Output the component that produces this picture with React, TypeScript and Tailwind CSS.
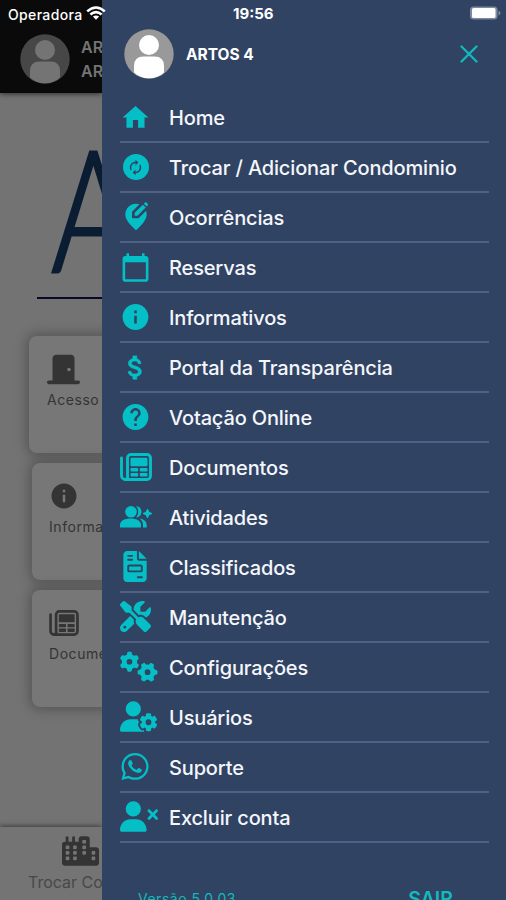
import type { ReactNode } from "react";
import {
  MdAttachMoney,
  MdCalendarToday,
  MdEditLocationAlt,
  MdHelp,
  MdHome,
  MdInfo,
  MdSync,
} from "react-icons/md";
import {
  FaCity,
  FaDoorClosed,
  FaFileInvoice,
  FaGears,
  FaScrewdriverWrench,
  FaUserGear,
  FaUserXmark,
  FaWhatsapp,
} from "react-icons/fa6";

const MENU: { label: string; icon: ReactNode; box: string }[] = [
  { label: "Home", icon: <MdHome size={31} />, box: "w-[31px]" },
  {
    label: "Trocar / Adicionar Condominio",
    icon: <SwapIcon />,
    box: "w-[31px]",
  },
  {
    label: "Ocorrências",
    icon: <MdEditLocationAlt size={32} />,
    box: "w-[32px]",
  },
  { label: "Reservas", icon: <MdCalendarToday size={31} />, box: "w-[31px]" },
  { label: "Informativos", icon: <MdInfo size={32} />, box: "w-[31px]" },
  {
    label: "Portal da Transparência",
    icon: (
      <MdAttachMoney
        size={31}
        className="[&>path:last-child]:stroke-current [&>path:last-child]:stroke-[0.5px]"
      />
    ),
    box: "w-[31px]",
  },
  { label: "Votação Online", icon: <MdHelp size={32} />, box: "w-[31px]" },
  {
    label: "Documentos",
    icon: <NewspaperIcon className="h-[28px] w-[32px]" />,
    box: "w-[32px]",
  },
  { label: "Atividades", icon: <PeopleIcon />, box: "w-[32px]" },
  {
    label: "Classificados",
    icon: <FaFileInvoice size={31} />,
    box: "w-[30px] -mt-[2px]",
  },
  {
    label: "Manutenção",
    icon: <FaScrewdriverWrench size={31} />,
    box: "w-[31px] -mt-[2px]",
  },
  {
    label: "Configurações",
    icon: <FaGears className="h-[31px] w-[38px]" />,
    box: "w-[38px] -mt-[2px]",
  },
  {
    label: "Usuários",
    icon: <FaUserGear className="h-[31px] w-[38px]" />,
    box: "w-[38px] -mt-[2px]",
  },
  { label: "Suporte", icon: <FaWhatsapp size={31} />, box: "w-[30px] -mt-[2px]" },
  {
    label: "Excluir conta",
    icon: <FaUserXmark className="h-[31px] w-[38px]" />,
    box: "w-[38px] -mt-[2px]",
  },
];

function SwapIcon() {
  return (
    <span className="flex size-[26px] items-center justify-center rounded-full bg-[#05bfc6] text-[#304363]">
      <MdSync size={17} className="-scale-x-100" />
    </span>
  );
}

function NewspaperIcon({ className }: { className: string }) {
  return (
    <svg viewBox="0 0 32 28" fill="currentColor" className={className}>
      <path
        d="M1.500 5v17.500a4 4 0 0 0 4 4H27a3.500 3.500 0 0 0 3.500-3.500V5A3.500 3.500 0 0 0 27 1.500H11A3.500 3.500 0 0 0 7.500 5v17.500a3 3 0 0 1-3 4"
        fill="none"
        stroke="currentColor"
        strokeWidth="2.900"
        strokeLinecap="round"
      />
      <rect x="10.500" y="4.700" width="17" height="8.600" rx="1" />
      <rect x="10.500" y="15" width="7.700" height="3.600" rx="0.800" />
      <rect x="19.800" y="15" width="7.700" height="3.600" rx="0.800" />
      <rect x="10.500" y="20" width="7.700" height="3.600" rx="0.800" />
      <rect x="19.800" y="20" width="7.700" height="3.600" rx="0.800" />
    </svg>
  );
}

function PeopleIcon() {
  return (
    <svg width="32" height="24" viewBox="0 0 32 24" fill="currentColor">
      <circle cx="11" cy="6.800" r="5.800" />
      <path d="M0 22.500v-2.500c0-4.500 5-6.500 10.500-6.500s10.500 2 10.500 6.500v2.500z" />
      <path d="M16 1c3.500.3 5.400 2.800 5.400 5.800s-1.900 5.500-5.400 5.800c1.500-1.500 2.200-3.500 2.200-5.800S17.500 2.500 16 1z" />
      <path d="M19.700 13.500c4.300.8 7 2.900 7 6.500v2.500H23V20c0-2.400-1-4.600-3.300-6.500z" />
      <path
        d="M27.500 4.500l1.400 2.700 2.700 1.300-2.700 1.300-1.400 2.700-1.400-2.700-2.700-1.300 2.700-1.300z"
        stroke="currentColor"
        strokeWidth="1.200"
        strokeLinejoin="round"
      />
    </svg>
  );
}

function Avatar({ dim = false }: { dim?: boolean }) {
  return (
    <svg
      viewBox="0 0 50 50"
      className={
        dim
          ? "size-[50px] shrink-0 text-[#747474]"
          : "size-[50px] shrink-0 text-white"
      }
    >
      <circle cx="25" cy="25" r="24.700" fill={dim ? "#474747" : "#999999"} />
      <circle cx="25" cy="16" r="10" fill="currentColor" />
      <path
        d="M10 43.500V37q0-9.500 9.500-9.500h11q9.500 0 9.500 9.500v6.500q-6 5.800-15 5.800t-15-5.800z"
        fill="currentColor"
      />
    </svg>
  );
}

function StatusBar() {
  return (
    <div className="absolute inset-x-0 top-0 flex h-7 items-center text-white">
      <span className="ml-2 w-[74px] text-[14px] font-medium tracking-[0.35px]">
        Operadora
      </span>
      <svg viewBox="0 0 20 14" className="mb-[3px] ml-[4px] h-[14px] w-[20px]">
        <g fill="none" stroke="currentColor" strokeWidth="2.600">
          <path d="M1.200 5.400q8.800-7.800 17.600 0" />
          <path d="M4.400 8.600q5.600-4.800 11.200 0" />
        </g>
        <path d="M6.900 10.600q3.100-2.400 6.200 0L10 13.800z" fill="currentColor" />
      </svg>
      <span className="ml-[127px] text-[15px] font-bold">19:56</span>
      <svg
        viewBox="0 0 31 14"
        className="mr-[5px] mb-[2px] ml-auto h-[14px] w-[31px]"
      >
        <rect x="0" y="0.500" width="27.500" height="13" rx="3.500" fill="#7d899e" />
        <rect x="2" y="2" width="23.500" height="10" rx="1.500" fill="white" />
        <path d="M28.500 4.500q2 1 2 2.500t-2 2.500z" fill="#7d899e" />
      </svg>
    </div>
  );
}

function Card({
  icon,
  label,
  className,
}: {
  icon: ReactNode;
  label: string;
  className: string;
}) {
  return (
    <div
      className={`h-[117px] w-[130px] rounded-lg bg-[#777777] text-[#343434] shadow-[0_0_12px_3px_rgba(0,0,0,0.25)] ${className}`}
    >
      <div className="flex h-[34px] items-center">{icon}</div>
      <p className="mt-[5px] text-[14px] leading-[18px] tracking-[0.55px] whitespace-nowrap">
        {label}
      </p>
    </div>
  );
}

function Page() {
  return (
    <div className="flex h-full w-[102px] shrink-0 flex-col overflow-hidden bg-[#737373]">
      <div className="flex h-[93px] shrink-0 items-start bg-[#0a0a0a] pt-[34px] pl-[20px] shadow-[0_1px_5px_rgba(0,0,0,0.6)]">
        <Avatar dim />
        <div className="ml-[11px] text-[16px] leading-[24px] font-semibold whitespace-nowrap text-[#747474]">
          <p className="mt-[1px]">ARTOS 4</p>
          <p>ARTOS</p>
        </div>
      </div>

      {/* Logo */}
      <div className="flex h-[207px] shrink-0 flex-col pl-[37px]">
        <div className="h-[204px] pt-[23px] pl-[14px]">
          <span className="block origin-left scale-x-[0.76] font-[Lato] text-[170px] leading-[180px] font-light text-[#0b1d33] [-webkit-text-stroke:3px_#0b1d33]">
            A
          </span>
        </div>
        <div className="h-[2px] shrink-0 bg-[#060a26]" />
      </div>

      {/* Cards */}
      <div className="flex shrink-0 flex-col gap-[10px] pt-[36px]">
        <Card
          className="ml-[29px] pt-[16px] pl-[18px]"
          icon={<FaDoorClosed className="h-[31px] w-[33px]" />}
          label="Acesso"
        />
        <Card
          className="ml-[32px] pt-[16px] pl-[17px]"
          icon={<MdInfo size={30} />}
          label="Informativos"
        />
        <Card
          className="ml-[32px] pt-[16px] pl-[17px]"
          icon={<NewspaperIcon className="h-[26px] w-[30px]" />}
          label="Documentos"
        />
      </div>

      <div className="mt-auto h-[73px] shrink-0 bg-[#747474] pt-[9px] pl-[28px] text-[#343434] shadow-[0_-1px_5px_rgba(0,0,0,0.5)]">
        <FaCity className="ml-[34px] h-[30px] w-[37px]" />
        <p className="mt-[5px] text-[16px] leading-[22px] whitespace-nowrap text-[#484848]">
          Trocar Condominio
        </p>
      </div>
    </div>
  );
}

function Drawer() {
  return (
    <div className="flex h-full min-w-0 flex-1 flex-col overflow-hidden bg-[#304363] pr-[17px] pl-[18px]">
      <div className="flex h-[93px] shrink-0 items-start pt-[29px] pl-[4px]">
        <Avatar />
        <span className="mt-[14px] ml-[12px] text-[15.5px] leading-6 font-bold text-white">
          ARTOS 4
        </span>
        <svg
          viewBox="0 0 18 18"
          className="mt-[16px] mr-[11px] ml-auto size-[18px] text-[#12b9bd]"
        >
          <path
            d="M1.500 1.500l15 15M16.500 1.500l-15 15"
            stroke="currentColor"
            strokeWidth="2.300"
            strokeLinecap="round"
          />
        </svg>
      </div>

      <ul className="shrink-0">
        {MENU.map((item) => (
          <li
            key={item.label}
            className="flex h-[50px] items-center border-b-2 border-[#506184]"
          >
            <span className="w-[49px] shrink-0 text-[#05bfc6]">
              <span className={`flex justify-center ${item.box}`}>
                {item.icon}
              </span>
            </span>
            <span className="pt-[1px] text-[20px] font-medium tracking-[-0.15px] whitespace-nowrap text-[#f4f6fb]">
              {item.label}
            </span>
          </li>
        ))}
      </ul>

      <div className="mt-[46px] flex shrink-0 items-start justify-between pr-[36px] pl-[18px] text-[#12b9bd]">
        <span className="text-[14px] leading-5 tracking-[0.5px]">
          Versão 5.0.03
        </span>
        <span className="text-[19.5px] leading-5 font-semibold">SAIR</span>
      </div>
    </div>
  );
}

export default function App() {
  return (
    <div className="relative flex h-[900px] w-[506px] overflow-hidden font-[Inter,sans-serif]">
      <Page />
      <Drawer />
      <StatusBar />
    </div>
  );
}
